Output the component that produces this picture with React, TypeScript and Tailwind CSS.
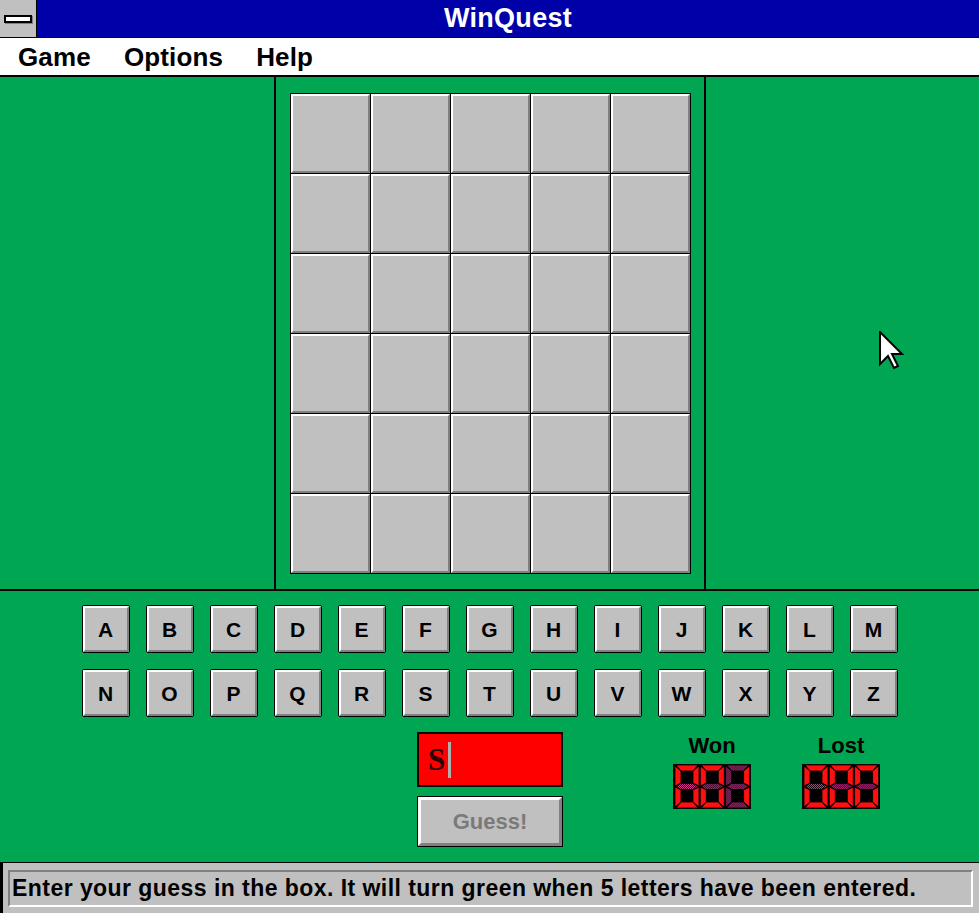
import React from "react";

const SEG: Record<string, string> = {
  a: "1,0 23,0 18,6 6,6",
  f: "0,1 6,6 6,18 0,21",
  b: "24,1 24,21 18,18 18,6",
  g: "1,21.5 6,18.5 18,18.5 23,21.5 18,24.5 6,24.5",
  e: "0,22 6,25 6,37 0,42",
  c: "24,22 24,42 18,37 18,25",
  d: "1,43 23,43 18,37 6,37",
};

const DIGITS: Record<string, string> = {
  "0": "abcdef",
  "1": "bc",
};

function Counter({ value }: { value: string }) {
  return (
    <svg width="78" height="45" viewBox="0 0 78 45" className="block">
      <defs>
        <pattern id="dith" width="2" height="2" patternUnits="userSpaceOnUse">
          <rect width="2" height="2" fill="#1a0010" />
          <rect width="1" height="1" fill="#d0308a" />
          <rect x="1" y="1" width="1" height="1" fill="#d0308a" />
        </pattern>
      </defs>
      <rect width="78" height="45" fill="#000" />
      {value.split("").map((ch, i) => (
        <g key={i} transform={`translate(${2 + i * 25.3},1)`}>
          {Object.keys(SEG).map((s) => (
            <polygon
              key={s}
              points={SEG[s]}
              fill={DIGITS[ch].includes(s) ? "#ff1010" : "url(#dith)"}
              stroke="#000"
              strokeWidth="0.8"
            />
          ))}
        </g>
      ))}
    </svg>
  );
}

function Cell() {
  return (
    <div className="w-[80px] h-[80px] border-r border-b border-black">
      <div className="w-full h-full bg-[#c0c0c0] border-t-2 border-l-2 border-t-white border-l-white border-b-2 border-r-2 border-b-[#808080] border-r-[#808080]" />
    </div>
  );
}

function Key({ ch }: { ch: string }) {
  return (
    <div className="w-[48px] h-[48px] border border-black rounded-[2px]">
      <div className="w-full h-full bg-[#c0c0c0] border-t-2 border-l-2 border-t-white border-l-white border-b-2 border-r-2 border-b-[#808080] border-r-[#808080] flex items-center justify-center text-[21px] font-bold text-black leading-none">
        {ch}
      </div>
    </div>
  );
}

export default function App() {
  const row1 = "ABCDEFGHIJKLM".split("");
  const row2 = "NOPQRSTUVWXYZ".split("");
  return (
    <div className="w-[979px] h-[913px] flex flex-col bg-[#00a651] relative overflow-hidden font-['Liberation_Sans',Arial,sans-serif]">
      {/* Title bar */}
      <div className="h-[38px] flex bg-[#0000a8] border-b border-black">
        <div className="w-[37px] h-full bg-[#c0c0c0] border-r border-black flex items-center justify-center">
          <div className="w-[28px] h-[8px] bg-white border-2 border-black shadow-[1px_1px_0_#808080]" />
        </div>
        <div className="flex-1 flex items-center justify-center text-white text-[27px] font-bold tracking-[0.3px] leading-none">
          WinQuest
        </div>
      </div>
      {/* Menu bar */}
      <div className="h-[39px] bg-white border-b-2 border-black flex items-center pl-[18px] gap-[33px] text-[26px] font-bold text-black leading-none tracking-[0.15px]">
        <span>Game</span>
        <span>Options</span>
        <span>Help</span>
      </div>
      {/* Top section */}
      <div className="h-[514px] flex border-b-2 border-black">
        <div className="w-[276px] border-r-2 border-black" />
        <div className="w-[430px] border-r-2 border-black flex items-center justify-center">
          <div className="grid grid-cols-5 border-t border-l border-black">
            {Array.from({ length: 30 }).map((_, i) => (
              <Cell key={i} />
            ))}
          </div>
        </div>
        <div className="flex-1" />
      </div>
      {/* Bottom section */}
      <div className="flex-1 flex flex-col items-center pt-[14px]">
        <div className="flex gap-[16px]">
          {row1.map((c) => (
            <Key key={c} ch={c} />
          ))}
        </div>
        <div className="flex gap-[16px] mt-[16px]">
          {row2.map((c) => (
            <Key key={c} ch={c} />
          ))}
        </div>
        <div className="self-stretch flex mt-[15px] pl-[417px]">
          <div className="flex flex-col gap-[9px]">
            <div className="w-[146px] h-[55px] bg-[#ff0000] border-2 border-black flex items-center pl-[9px]">
              <span className="font-['Liberation_Serif',serif] font-bold text-[31px] text-[#2a0000] leading-none">S</span>
              <span className="w-[3px] h-[36px] bg-[#b0b0b0] ml-[3px]" />
            </div>
            <div className="w-[146px] h-[51px] border border-black">
              <div className="w-full h-full bg-[#c0c0c0] border-t-[3px] border-l-[3px] border-t-white border-l-white border-b-[3px] border-r-[3px] border-b-[#808080] border-r-[#808080] flex items-center justify-center text-[22px] font-bold text-[#7a7a7a] leading-none">
                Guess!
              </div>
            </div>
          </div>
          <div className="flex flex-col items-center ml-[110px] pt-[3px]">
            <span className="text-[22px] font-bold text-black leading-none h-[29px]">Won</span>
            <Counter value="001" />
          </div>
          <div className="flex flex-col items-center ml-[51px] pt-[3px]">
            <span className="text-[22px] font-bold text-black leading-none h-[29px]">Lost</span>
            <Counter value="000" />
          </div>
        </div>
      </div>
      {/* Status bar */}
      <div className="h-[51px] bg-[#c0c0c0] border-t border-black border-l-[3px] border-l-black pl-[5px] pr-[6px] pt-[7px] pb-[6px]">
        <div className="h-full border-t-2 border-l-2 border-t-[#808080] border-l-[#808080] border-b-2 border-r-2 border-b-white border-r-white flex items-center pl-[2px]">
          <span className="text-[23px] font-bold text-black leading-none whitespace-nowrap tracking-[0.45px]">
            Enter your guess in the box. It will turn green when 5 letters have been entered.
          </span>
        </div>
      </div>
      {/* Mouse cursor */}
      <svg
        className="absolute left-[879px] top-[331px]"
        width="26"
        height="40"
        viewBox="-1 -1 26 40"
      >
        <polygon
          points="0,0 0,32 8,24 14,36 18,34 12,22 22,22"
          fill="#fff"
          stroke="#000"
          strokeWidth="2"
          strokeLinejoin="miter"
        />
      </svg>
    </div>
  );
}
